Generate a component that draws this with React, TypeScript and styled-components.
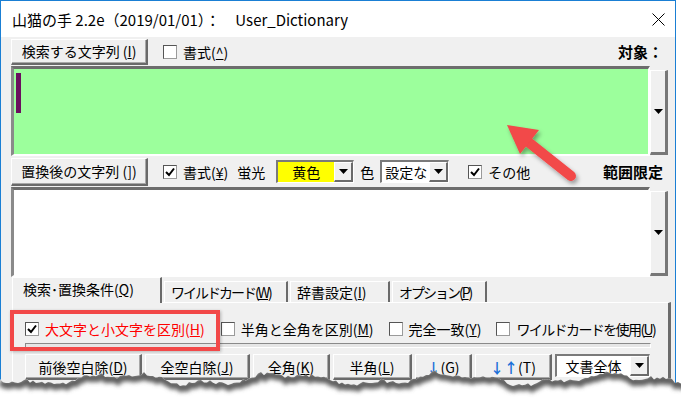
import React from 'react';
import styled, { createGlobalStyle } from 'styled-components';

const GlobalStyle = createGlobalStyle`
  html, body { margin: 0; padding: 0; background: #fff; }
  body {
    width: 681px;
    height: 398px;
    overflow: hidden;
    font-family: "Noto Sans CJK JP", "Noto Sans", sans-serif;
    color: #000;
  }
  u { text-decoration: underline; text-underline-offset: 1px; }
`;

const Stage = styled.div`
  position: relative;
  width: 681px;
  height: 398px;
  overflow: hidden;
  background: #fff;
`;

const Window = styled.div`
  width: 676px;
  height: 398px;
  box-sizing: border-box;
  border: 1px solid #1a7fd4;
  border-bottom: none;
  background: #f0f0f0;
  display: flex;
  flex-direction: column;
`;

const TitleBar = styled.div`
  height: 36px;
  flex: none;
  background: #fff;
  display: flex;
  align-items: center;
  justify-content: space-between;
  padding: 0 10px 0 11px;
  font-size: 15px;
  white-space: pre;
`;

const Body = styled.div`
  flex: 1;
  display: flex;
  flex-direction: column;
  padding: 0 7px 0 10px;
`;

const ToolRow = styled.div<{ $h: number }>`
  height: ${p => p.$h}px;
  flex: none;
  display: flex;
  align-items: center;
  font-size: 14px;
  white-space: nowrap;
`;

const PushButton = styled.button<{ $w: number; $h?: number }>`
  width: ${p => p.$w}px;
  height: ${p => p.$h ?? 26}px;
  flex: none;
  box-sizing: border-box;
  background: #f0f0f0;
  border: none;
  border-top: 1px solid #fff;
  border-left: 1px solid #fff;
  border-right: 2px solid #6a6a6a;
  border-bottom: 2px solid #6a6a6a;
  box-shadow: inset -1px -1px 0 #a8a8a8;
  font-family: inherit;
  font-size: 14px;
  color: #000;
  padding: 0;
  white-space: nowrap;
`;

const Check = styled.label<{ $ml?: number; $red?: boolean; $tight?: boolean }>`
  display: flex;
  align-items: center;
  gap: 6px;
  margin-left: ${p => p.$ml ?? 0}px;
  color: ${p => (p.$red ? '#ff0000' : '#000')};
  letter-spacing: ${p => (p.$tight ? '-1.6px' : '0')};
  font-size: 14px;
  white-space: nowrap;
`;

const Box = styled.span`
  width: 14px;
  height: 14px;
  box-sizing: border-box;
  background: #fff;
  border: 1px solid #9a9a9a;
  border-top-color: #555;
  border-left-color: #555;
  display: flex;
  align-items: center;
  justify-content: center;
  flex: none;
`;

const Plain = styled.span<{ $ml?: number }>`
  margin-left: ${p => p.$ml ?? 0}px;
`;

const Heading = styled.span`
  margin-left: auto;
  margin-right: 5px;
  font-weight: bold;
  font-size: 15px;
`;

const EditorRow = styled.div`
  height: 90px;
  flex: none;
  display: flex;
`;

const TextBox = styled.div<{ $bg: string }>`
  flex: 1;
  position: relative;
  background: ${p => p.$bg};
  border-top: 3px solid #6d6d6d;
  border-left: 3px solid #8a8a8a;
  border-right: 2px solid #fff;
  border-bottom: 2px solid #fff;
`;

const Caret = styled.div`
  width: 5px;
  height: 40px;
  margin: 4px 0 0 2px;
  background: #6a0f5e;
`;

const Scroll = styled.div`
  width: 18px;
  margin: 4px 0 1px 0;
  box-sizing: border-box;
  background: #f0f0f0;
  border-top: 1px solid #fff;
  border-left: 1px solid #fff;
  border-right: 3px solid #777;
  border-bottom: 3px solid #777;
  display: flex;
  align-items: center;
  justify-content: center;
`;

const Combo = styled.div<{ $w: number; $ml?: number }>`
  width: ${p => p.$w}px;
  height: 23px;
  margin-left: ${p => p.$ml ?? 0}px;
  box-sizing: border-box;
  display: flex;
  border-top: 2px solid #7a7a7a;
  border-left: 2px solid #7a7a7a;
  border-right: 1px solid #fff;
  border-bottom: 1px solid #fff;
  flex: none;
`;

const ComboField = styled.div<{ $bg: string; $pl?: number }>`
  flex: 1;
  background: ${p => p.$bg};
  overflow: hidden;
  white-space: nowrap;
  font-size: 14px;
  line-height: 20px;
  padding-left: ${p => p.$pl ?? 0}px;
  text-align: ${p => (p.$pl ? 'left' : 'center')};
`;

const ComboArrow = styled.div`
  width: 19px;
  box-sizing: border-box;
  background: #f0f0f0;
  border-top: 1px solid #fff;
  border-left: 1px solid #fff;
  border-right: 2px solid #6a6a6a;
  border-bottom: 2px solid #6a6a6a;
  display: flex;
  align-items: center;
  justify-content: center;
`;

const TabStrip = styled.div`
  height: 25px;
  flex: none;
  display: flex;
  align-items: flex-end;
  padding-left: 1px;
  gap: 2px;
`;

const Tab = styled.div<{ $w: number; $active?: boolean; $tight?: boolean }>`
  width: ${p => p.$w}px;
  height: ${p => (p.$active ? 26 : 21)}px;
  margin-bottom: ${p => (p.$active ? -1 : 0)}px;
  box-sizing: border-box;
  background: #f0f0f0;
  border-top: 1px solid #fff;
  border-left: 1px solid #fff;
  border-right: 2px solid #6a6a6a;
  font-size: 14px;
  letter-spacing: ${p => (p.$tight ? '-2px' : '0')};
  padding-left: ${p => (p.$active ? 10 : 6)}px;
  line-height: ${p => (p.$active ? 22 : 20)}px;
  white-space: nowrap;
  position: relative;
  z-index: 1;
`;

const Panel = styled.div`
  flex: 1;
  margin: 0 -3px 0 1px;
  border-top: 1px solid #fff;
  border-left: 1px solid #fff;
  border-right: 3px solid #6b6b6b;
  padding-left: 12px;
  display: flex;
  flex-direction: column;
`;

const OptionRow = styled.div`
  height: 18px;
  margin-top: 17px;
  display: flex;
  align-items: center;
`;

const Groove = styled.div`
  width: 626px;
  height: 5px;
  margin-top: 5px;
  box-sizing: border-box;
  background: #e6e6e6;
  border-top: 1px solid #8a8a8a;
  border-left: 1px solid #8a8a8a;
  border-bottom: 1px solid #fff;
  border-right: 1px solid #fff;
`;

const ButtonRow = styled.div`
  display: flex;
  gap: 3px;
  margin-top: 6px;
`;

const Blue = styled.span`
  color: #1a6fd8;
  font-weight: bold;
`;

const Highlight = styled.div`
  position: absolute;
  left: 10px;
  top: 310px;
  width: 210px;
  height: 41px;
  box-sizing: border-box;
  border: 4px solid #f24848;
  box-shadow: 1px 1px 3px rgba(0, 0, 0, 0.25);
  pointer-events: none;
`;

const Overlay = styled.svg`
  position: absolute;
  left: 0;
  pointer-events: none;
`;

const Tick = () => (
  <svg width="10" height="10" viewBox="0 0 10 10">
    <polyline points="1,5 4,8 9,1.5" fill="none" stroke="#000" strokeWidth="2" />
  </svg>
);

const DownTri = () => (
  <svg width="9" height="5" viewBox="0 0 9 5">
    <polygon points="0,0 9,0 4.5,5" fill="#000" />
  </svg>
);

const CheckItem = ({ checked, children, ...rest }: { checked?: boolean; children: React.ReactNode; $ml?: number; $red?: boolean; $tight?: boolean }) => (
  <Check {...rest}>
    <Box>{checked && <Tick />}</Box>
    <span>{children}</span>
  </Check>
);

const tornPoints = (() => {
  const pts: [number, number][] = [];
  for (let x = 0; x <= 684; x += 3) {
    const r = Math.sin(x * 12.9898) * 43758.5453;
    const n = r - Math.floor(r);
    const y = 21 + 4.5 * Math.sin(x / 26) + 2.5 * Math.sin(x / 9.1 + 1) + (n - 0.5) * 4;
    pts.push([x, y]);
  }
  return pts;
})();

const TornEdge = () => {
  const line = tornPoints.map(([x, y]) => `${x},${y.toFixed(1)}`).join(' ');
  const area = `0,40 ${line} 684,40`;
  return (
    <Overlay width="681" height="40" viewBox="0 0 681 40" style={{ top: 358 }}>
      <defs>
        <clipPath id="below">
          <polygon points={area} />
        </clipPath>
        <filter id="soft" x="-5%" y="-100%" width="110%" height="300%">
          <feGaussianBlur stdDeviation="2.2" />
        </filter>
      </defs>
      <polygon points={area} fill="#fff" />
      <g clipPath="url(#below)">
        <polyline points={line} fill="none" stroke="#5e5e5e" strokeWidth="8" filter="url(#soft)" transform="translate(1,2)" />
      </g>
    </Overlay>
  );
};

const RedArrow = () => (
  <Overlay width="681" height="398" viewBox="0 0 681 398" style={{ top: 0 }}>
    <defs>
      <filter id="ash" x="-20%" y="-20%" width="140%" height="140%">
        <feDropShadow dx="2" dy="3" stdDeviation="2" floodColor="#000" floodOpacity="0.35" />
      </filter>
    </defs>
    <g filter="url(#ash)">
      <line x1="527" y1="141" x2="571" y2="176" stroke="#f24848" strokeWidth="10" strokeLinecap="round" />
      <polygon points="507,125 539,130 520,154" fill="#f24848" />
    </g>
  </Overlay>
);

export default function App() {
  return (
    <Stage>
      <GlobalStyle />
      <Window>
        <TitleBar>
          <span>山猫の手 2.2e（2019/01/01）：　User_Dictionary</span>
          <svg width="13" height="13" viewBox="0 0 13 13">
            <path d="M0.5 0.5 L12.5 12.5 M12.5 0.5 L0.5 12.5" stroke="#000" strokeWidth="1" />
          </svg>
        </TitleBar>
        <Body>
          <ToolRow $h={29}>
            <PushButton $w={137}>検索する文字列 (<u>I</u>)</PushButton>
            <CheckItem $ml={15}>書式(<u>^</u>)</CheckItem>
            <Heading>対象：</Heading>
          </ToolRow>
          <EditorRow>
            <TextBox $bg="#9cff9c">
              <Caret />
            </TextBox>
            <Scroll>
              <DownTri />
            </Scroll>
          </EditorRow>
          <ToolRow $h={31}>
            <PushButton $w={137} $h={28}>置換後の文字列 (<u>]</u>)</PushButton>
            <CheckItem $ml={15} checked>書式(<u>¥</u>)</CheckItem>
            <Plain $ml={9}>蛍光</Plain>
            <Combo $w={78} $ml={11}>
              <ComboField $bg="#ffff00">黄色</ComboField>
              <ComboArrow>
                <DownTri />
              </ComboArrow>
            </Combo>
            <Plain $ml={6}>色</Plain>
            <Combo $w={69} $ml={6}>
              <ComboField $bg="#fff" $pl={3}>設定な</ComboField>
              <ComboArrow>
                <DownTri />
              </ComboArrow>
            </Combo>
            <CheckItem $ml={19} checked>その他</CheckItem>
            <Heading>範囲限定</Heading>
          </ToolRow>
          <EditorRow>
            <TextBox $bg="#fff" />
            <Scroll>
              <DownTri />
            </Scroll>
          </EditorRow>
          <TabStrip>
            <Tab $w={150} $active>検索･置換条件(<u>Q</u>)</Tab>
            <Tab $w={124} $tight>ワイルドカード(<u>W</u>)</Tab>
            <Tab $w={100}>辞書設定(<u>I</u>)</Tab>
            <Tab $w={95} $tight>オプション(<u>P</u>)</Tab>
          </TabStrip>
          <Panel>
            <OptionRow>
              <CheckItem checked $red>大文字と小文字を区別(<u>H</u>)</CheckItem>
              <CheckItem $ml={16}>半角と全角を区別(<u>M</u>)</CheckItem>
              <CheckItem $ml={15}>完全一致(<u>Y</u>)</CheckItem>
              <CheckItem $ml={15} $tight>ワイルドカードを使用(<u>U</u>)</CheckItem>
            </OptionRow>
            <Groove />
            <ButtonRow>
              <PushButton $w={117}>前後空白除(<u>D</u>)</PushButton>
              <PushButton $w={105}>全空白除(<u>J</u>)</PushButton>
              <PushButton $w={77}>全角(<u>K</u>)</PushButton>
              <PushButton $w={79}>半角(<u>L</u>)</PushButton>
              <PushButton $w={57}><Blue>↓</Blue>(G)</PushButton>
              <PushButton $w={77}><Blue>↓↑</Blue>(T)</PushButton>
              <Combo $w={95}>
                <ComboField $bg="#fff">文書全体</ComboField>
                <ComboArrow>
                  <DownTri />
                </ComboArrow>
              </Combo>
            </ButtonRow>
          </Panel>
        </Body>
      </Window>
      <Highlight />
      <RedArrow />
      <TornEdge />
    </Stage>
  );
}
